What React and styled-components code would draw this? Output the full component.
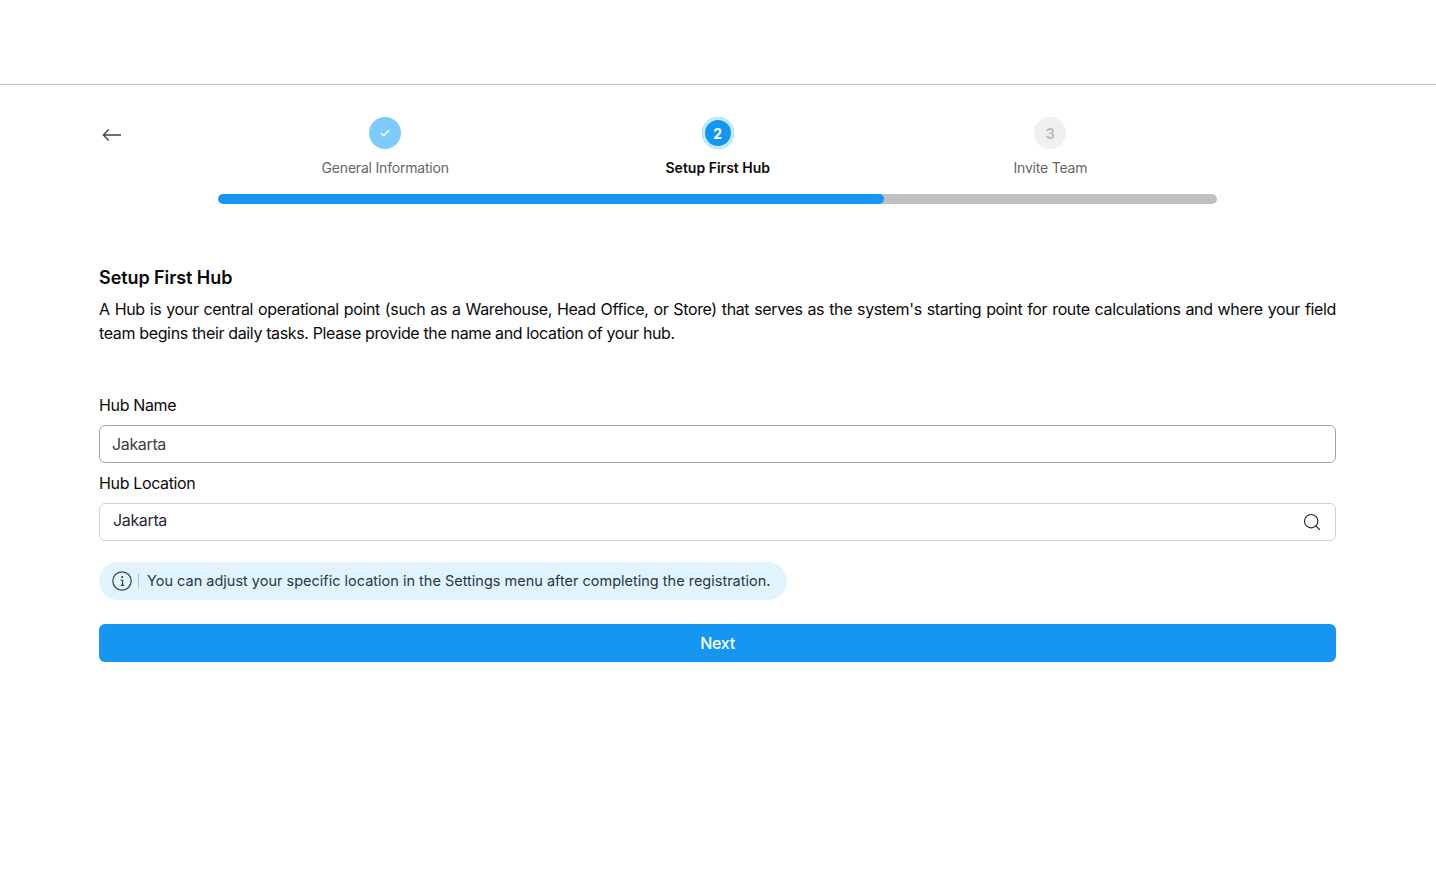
import React from "react";
import styled, { createGlobalStyle } from "styled-components";
import { Search } from "lucide-react";

const GlobalStyle = createGlobalStyle`
  body {
    margin: 0;
    background: #fff;
    font-family: "Inter", "Liberation Sans", sans-serif;
    color: #0a0a0a;
  }
`;

const steps = [
  { label: "General Information", state: "done" },
  { label: "Setup First Hub", state: "active" },
  { label: "Invite Team", state: "todo" },
];

const App = () => {
  return (
    <>
      <GlobalStyle />
      <Header />
      <Main>
        <StepperRow>
          <BackButton aria-label="Back">
            <svg width="20" height="14" viewBox="0 0 20 14" fill="none" stroke="#404040" strokeWidth="1.4">
              <path d="M1.4 7H19M6.7 1.5 1.4 7l5.3 5.5" />
            </svg>
          </BackButton>
          <Stepper>
            <Steps>
              {steps.map((step, i) => (
                <Step key={step.label}>
                  <Circle $state={step.state}>
                    {step.state === "done" ? (
                      <svg width="10" height="8" viewBox="0 0 10 8" fill="none" stroke="#fff" strokeWidth="1.4">
                        <path d="M1 4l2.8 2.8L9 1.2" />
                      </svg>
                    ) : (
                      i + 1
                    )}
                  </Circle>
                  <StepLabel $active={step.state === "active"}>{step.label}</StepLabel>
                </Step>
              ))}
            </Steps>
            <Track>
              <TrackFill style={{ width: `${(2 / 3) * 100}%` }} />
            </Track>
          </Stepper>
        </StepperRow>

        <Title>Setup First Hub</Title>
        <Description>
          A Hub is your central operational point (such as a Warehouse, Head Office, or Store) that serves as the
          system's starting point for route calculations and where your field team begins their daily tasks. Please
          provide the name and location of your hub.
        </Description>

        <Form>
          <Label htmlFor="hub-name">Hub Name</Label>
          <NameInput id="hub-name" defaultValue="Jakarta" />
          <Label htmlFor="hub-location">Hub Location</Label>
          <SearchBox>
            <LocationInput id="hub-location" defaultValue="Jakarta" />
            <Search size={20} color="#1f2937" strokeWidth={1.4} />
          </SearchBox>
          <Notice>
            <svg width="20" height="20" viewBox="0 0 20 20" fill="none" stroke="#374151" strokeWidth="1.2">
              <circle cx="10" cy="10" r="9.2" />
              <path d="M10.6 9v5.2M8.8 9.2h1.8M8.8 14.4h3.4" />
              <circle cx="10.2" cy="6" r=".5" fill="#374151" />
            </svg>
            <NoticeDivider />
            <NoticeText>
              You can adjust your specific location in the Settings menu after completing the registration.
            </NoticeText>
          </Notice>
          <NextButton type="button">Next</NextButton>
        </Form>
      </Main>
    </>
  );
};

const Header = styled.header`
  height: 84px;
  border-bottom: 1px solid #c4c4c4;
`;

const Main = styled.main`
  padding: 32px 100px 0 99px;
`;

const StepperRow = styled.div`
  display: grid;
  grid-template-columns: 119px 999px;
`;

const BackButton = styled.button`
  align-self: start;
  justify-self: start;
  display: flex;
  width: 26px;
  height: 14px;
  margin-top: 11px;
  padding: 0 0 0 3px;
  background: none;
  border: none;
  cursor: pointer;
`;

const Stepper = styled.div`
  display: flex;
  flex-direction: column;
`;

const Steps = styled.div`
  display: grid;
  grid-template-columns: repeat(3, 1fr);
  padding: 0 0.3px 0 0.9px;
`;

const Step = styled.div`
  display: flex;
  flex-direction: column;
  align-items: center;
`;

const circleStyles = {
  done: "background: #7ccbfc; color: #fff;",
  active: "background: #1496f2; color: #fff; box-shadow: inset 0 0 0 3px #c9ebfe;",
  todo: "background: #f0f0f0; color: #bdbdbd;",
};

const Circle = styled.div`
  display: flex;
  align-items: center;
  justify-content: center;
  width: 32px;
  height: 32px;
  border-radius: 50%;
  font-size: 14px;
  font-weight: 700;
  ${(p) => circleStyles[p.$state]}
`;

const StepLabel = styled.div`
  margin-top: 10px;
  font-size: 14px;
  line-height: 18px;
  font-weight: ${(p) => (p.$active ? 600 : 400)};
  letter-spacing: ${(p) => (p.$active ? "0" : "-0.2px")};
  color: ${(p) => (p.$active ? "#0a0a0a" : "#666666")};
`;

const Track = styled.div`
  height: 10px;
  margin-top: 17px;
  border-radius: 5px;
  background: #c0c0c0;
  overflow: hidden;
`;

const TrackFill = styled.div`
  height: 100%;
  border-radius: 5px;
  background: #1496f2;
`;

const Title = styled.h1`
  margin: 62px 0 0;
  font-size: 18px;
  line-height: 24px;
  font-weight: 600;
  letter-spacing: -0.07px;
`;

const Description = styled.p`
  margin: 7px 0 0;
  font-size: 16px;
  line-height: 24px;
  letter-spacing: -0.36px;
  text-align: justify;
`;

const Form = styled.form`
  display: flex;
  flex-direction: column;
  margin-top: 48px;
`;

const Label = styled.label`
  font-size: 16px;
  line-height: 24px;
  letter-spacing: -0.36px;
  margin-bottom: 8px;
`;

const NameInput = styled.input`
  box-sizing: border-box;
  height: 38px;
  margin-bottom: 8px;
  padding: 0 12px;
  border: 1px solid #a3a3a3;
  border-radius: 6px;
  font: inherit;
  font-size: 16px;
  letter-spacing: -0.35px;
  color: #404040;
  outline: none;
`;

const SearchBox = styled.div`
  display: flex;
  align-items: center;
  box-sizing: border-box;
  height: 38px;
  padding: 0 13px;
  border: 1px solid #ced4da;
  border-radius: 6px;
`;

const LocationInput = styled.input`
  flex: 1;
  box-sizing: border-box;
  height: 30px;
  padding: 0 0 4px;
  border: none;
  background: transparent;
  font: inherit;
  font-size: 16px;
  letter-spacing: -0.35px;
  color: #1f2937;
  outline: none;
`;

const Notice = styled.div`
  display: flex;
  align-items: center;
  align-self: flex-start;
  box-sizing: border-box;
  height: 38px;
  margin-top: 21px;
  padding: 0 17px 0 13px;
  border-radius: 19px;
  background: #e1f4fe;
  font-size: 14.5px;
  color: #2b3544;
`;

const NoticeDivider = styled.i`
  width: 1px;
  height: 14px;
  margin: 0 8px 0 6px;
  background: #b8c2cc;
`;

const NoticeText = styled.span`
  margin-top: -1px;
`;

const NextButton = styled.button`
  height: 38px;
  margin-top: 24px;
  border: none;
  border-radius: 6px;
  background: #1496f2;
  color: #fff;
  font: inherit;
  font-size: 16px;
  font-weight: 500;
  letter-spacing: -0.3px;
  cursor: pointer;
`;

export default App;
